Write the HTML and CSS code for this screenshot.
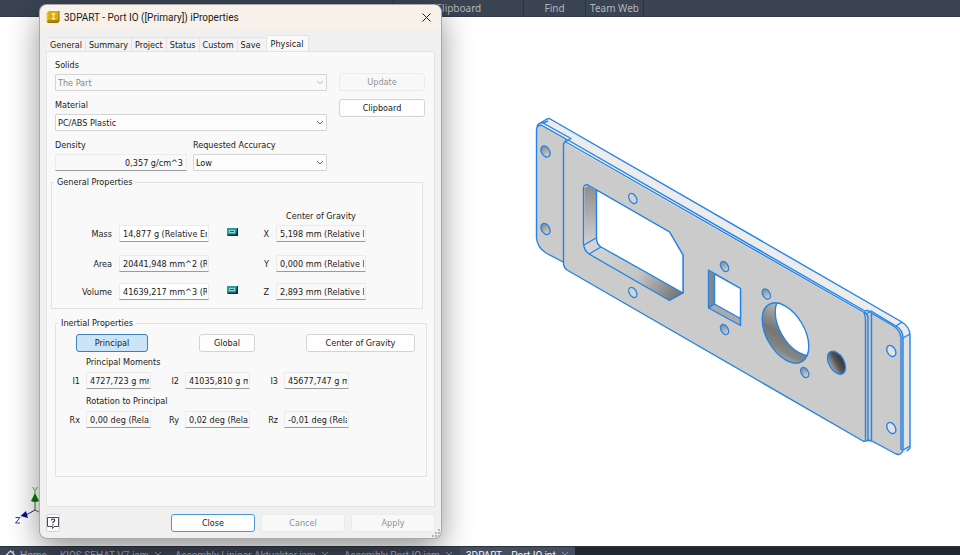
FILE: index.html
```html
<!DOCTYPE html>
<html lang="en">
<head>
<meta charset="utf-8">
<title>3DPART - Port IO iProperties</title>
<link rel="stylesheet" href="styles.css">
</head>
<body>
<div class="app">
  <header class="ribbon">
    <span class="ribbon-space"></span>
    <span class="ribbon-group clipboard">Clipboard</span>
    <span class="ribbon-group find">Find</span>
    <span class="ribbon-group team">Team Web</span>
  </header>

  <main class="canvas">
    <svg class="scene" viewBox="0 17 960 529" role="img" aria-label="Port IO part">
      <defs>
        <linearGradient id="wallV" x1="0" y1="0" x2="0" y2="1"><stop offset="0" stop-color="#8d8d8d"/><stop offset="1" stop-color="#d2d2d2"/></linearGradient>
        <linearGradient id="wallH" gradientUnits="userSpaceOnUse" x1="595" y1="245" x2="678" y2="294"><stop offset="0" stop-color="#d4d4d4"/><stop offset=".55" stop-color="#c4c4c4"/><stop offset="1" stop-color="#777"/></linearGradient>
        <linearGradient id="bore" gradientUnits="userSpaceOnUse" x1="768" y1="312" x2="800" y2="362"><stop offset="0" stop-color="#c2c2c2"/><stop offset=".5" stop-color="#757575"/><stop offset=".75" stop-color="#858585"/><stop offset="1" stop-color="#c4c4c4"/></linearGradient>
        <linearGradient id="hole" x1="0" y1="0" x2="0" y2="1"><stop offset="0" stop-color="#333"/><stop offset=".5" stop-color="#555"/><stop offset="1" stop-color="#a8a8a8"/></linearGradient>
        <linearGradient id="pin" x1="0" y1="0" x2="1" y2="0"><stop offset="0" stop-color="#888"/><stop offset="1" stop-color="#d4d4d4"/></linearGradient>
        <clipPath id="boreClip"><ellipse cx="785.5" cy="333" rx="33" ry="19" transform="rotate(60 785.5 333)"/></clipPath>
      </defs>
      <g stroke="#2483e6" stroke-width="1.4" stroke-linejoin="round" fill="none">
        <path fill="#ececec" d="M537 127Q538 124 542 122L546 119.500Q548 118.500 551 119.500L901 321.500Q910 327 910 335V449Q908 453 903 453L865 441L537 238Z" stroke="none"/>
        <path fill="#cbcbcb" stroke="none" d="M537 129Q537 124 542 125L567 139L565 143L866 315L872 312L896 326Q903 330 903 338V448Q902 456 896 454L872 441L865 442L567 270Q563 267 563 262L546 253Q537 247 537 238Z"/>
        <path fill="#dfe1e3" d="M903 338L910 334V449L903 452Z" stroke="none"/>
        <path d="M536.500 129V238Q537 247 546 253L563 262M536.500 130Q537 124 542 125.500L566 139M537 127Q538 122 543 123L571 138.500L565 142M540 123L547 119Q549 118 552 120L901 321.500Q910 327 910 335V448L907 451M543 123L548 121"/>
        <path d="M563.500 143V262Q563 267 567 270L863 441Q865 442 868 440L872 441L896 454Q902 456 903 449V338Q903 330 896 326L871 311L866 314"/>
        <path d="M563.500 144L565 141.500L864 312.500Q867 313 868 317V440M565 140L568 140L864 310.500M864 311L868 310.500L871.500 313V440M864 313Q865 315 865.500 319V441M872 313.500L892 325Q900.500 330 901 338V450M903 338L910 334M896 326L902 322M903 450L910 446"/>
        <g fill="url(#pin)">
          <ellipse cx="545.500" cy="151.500" rx="6" ry="4" transform="rotate(60 545.500 151.500)"/>
          <ellipse cx="545.500" cy="229" rx="6" ry="4" transform="rotate(60 545.500 229)"/>
          <ellipse cx="724.500" cy="266.500" rx="5.500" ry="3.500" transform="rotate(60 724.500 266.500)"/>
          <ellipse cx="724.500" cy="329.500" rx="5.500" ry="3.500" transform="rotate(60 724.500 329.500)"/>
          <ellipse cx="766.300" cy="294" rx="5.500" ry="3.500" transform="rotate(60 766.300 294)"/>
          <ellipse cx="804.700" cy="372.500" rx="5.500" ry="3.500" transform="rotate(60 804.700 372.500)"/>
        </g>
        <g fill="#d2d2d2">
          <ellipse cx="632.800" cy="198.500" rx="5.500" ry="3.500" transform="rotate(60 632.800 198.500)"/>
          <ellipse cx="632.800" cy="292.500" rx="5.500" ry="3.500" transform="rotate(60 632.800 292.500)"/>
          <ellipse cx="891.300" cy="351" rx="6" ry="4" transform="rotate(60 891.300 351)" fill="#e2e2e2"/>
          <ellipse cx="891.300" cy="428" rx="6" ry="4" transform="rotate(60 891.300 428)" fill="#e2e2e2"/>
        </g>
        <path fill="url(#wallH)" d="M583.500 188Q584 184 588 185L669.500 232L683 255V293L669.500 300.500L589 254Q583.500 250 583.500 243Z"/>
        <path fill="url(#wallV)" stroke="none" d="M584.500 188L588 186L596 190V239L584.500 245Z"/>
        <path fill="#fff" d="M596.500 190L669.500 232L683 255V293L601 247Q596.500 244 596.500 238Z"/>
        <path d="M584 245L596 238M589 254L601 247"/>
        <path fill="#aaa" d="M708.500 270L740.500 288.500V325.500L708.500 308Z"/>
        <path fill="#858585" stroke="none" d="M709 271L714.500 274V304L709 307Z"/>
        <path fill="#fff" d="M714.500 274L740.500 288.500V318.500L714.500 304ZM708.500 308L714.500 304"/>
        <ellipse fill="url(#bore)" stroke="none" cx="785.500" cy="333" rx="33" ry="19" transform="rotate(60 785.500 333)"/>
        <g clip-path="url(#boreClip)"><ellipse fill="#fff" cx="798.500" cy="325.500" rx="33" ry="19" transform="rotate(60 798.500 325.500)"/></g>
        <ellipse cx="785.500" cy="333" rx="33" ry="19" transform="rotate(60 785.500 333)"/>
        <ellipse fill="url(#hole)" cx="836.500" cy="362.700" rx="12.500" ry="7.500" transform="rotate(60 836.500 362.700)"/>
      </g>
      <g class="triad">
        <path d="M35 510V500" stroke="#1b8a1b"/><path d="M31 501L35 493L39 501Q35 503 31 501Z" fill="#087a08"/>
        <path d="M35 510L27 514.500" stroke="#22229a"/><path d="M20.500 516L26 511L28 518Z" fill="#0a0a86"/>
        <path d="M35 510L41 513" stroke="#b33"/>
        <path d="M32.500 487L35 490.500L37.500 487M35 490.500V494" stroke="#2fcf2f" fill="none"/>
        <path d="M15.500 517.500H20L15.500 523H20" stroke="#3535dc" fill="none"/>
      </g>
    </svg>
  </main>

  <nav class="doc-tabs" aria-label="Documents">
    <a class="doc home" href="#"><svg class="home-icon" viewBox="0 0 12 12"><path d="M1 6L6 1L11 6M2.500 5V11H5V7H7V11H9.500V5M9 1V3" fill="none" stroke="#c5c9d0" stroke-width="1.500"/></svg>Home</a>
    <a class="doc kios" href="#">KIOS SEHAT V7.iam<svg class="x" viewBox="0 0 8 8"><path d="M1 1L7 7M7 1L1 7"/></svg></a>
    <a class="doc linear" href="#">Assembly Linioar Aktuaktor.iam<svg class="x" viewBox="0 0 8 8"><path d="M1 1L7 7M7 1L1 7"/></svg></a>
    <a class="doc port" href="#">Assembly Port IO.iam<svg class="x" viewBox="0 0 8 8"><path d="M1 1L7 7M7 1L1 7"/></svg></a>
    <a class="doc current" href="#">3DPART _ Port IO.ipt<svg class="x" viewBox="0 0 8 8"><path d="M1 1L7 7M7 1L1 7"/></svg></a>
    <span class="tabs-rest"></span>
  </nav>

  <section class="dialog" role="dialog" aria-labelledby="dialog-title">
    <div class="title-bar">
      <svg class="app-icon" viewBox="0 0 14 14"><path d="M1 2L3 0H14V11L12 13H1Z" fill="#8a6a06"/><path d="M1 2L3 0H13V10H1Z" fill="#d9ad0b"/><path d="M0 2H2V12H0Z" fill="#e8c544"/><path d="M1 10H12V12H1Z" fill="#b08708"/><path d="M5.500 3H9.500M5.500 8.500H9.500M7.500 3V8.500" stroke="#fff6cf" stroke-width="1.300"/></svg>
      <h1 id="dialog-title">3DPART - Port IO ([Primary]) iProperties</h1>
      <button class="close-x" aria-label="Close window"><svg viewBox="0 0 9 9"><path d="M.5.5L8.500 8.500M8.500.5L.5 8.500" stroke="#222" fill="none"/></svg></button>
    </div>
    <div class="tabs" role="tablist">
      <button role="tab">General</button><button role="tab">Summary</button><button role="tab">Project</button><button role="tab">Status</button><button role="tab">Custom</button><button role="tab" class="save">Save</button><button role="tab" class="active" aria-selected="true">Physical</button>
    </div>
    <div class="panel">
      <div class="top">
        <div class="material">
          <label for="solids">Solids</label>
          <div class="select"><select id="solids" disabled><option>The Part</option></select><svg viewBox="0 0 8 5"><path d="M1 1L4 4L7 1"/></svg></div>
          <label for="material">Material</label>
          <div class="select"><select id="material"><option>PC/ABS Plastic</option></select><svg viewBox="0 0 8 5"><path d="M1 1L4 4L7 1"/></svg></div>
          <div class="pair">
            <div><label for="density">Density</label><input id="density" class="density" value="0,357 g/cm^3" readonly></div>
            <div><label for="accuracy">Requested Accuracy</label><div class="select"><select id="accuracy"><option>Low</option></select><svg viewBox="0 0 8 5"><path d="M1 1L4 4L7 1"/></svg></div></div>
          </div>
        </div>
        <div class="actions"><button class="btn" disabled>Update</button><button class="btn">Clipboard</button></div>
      </div>

      <fieldset class="general">
        <legend>General Properties</legend>
        <div class="general-grid">
          <span class="cog">Center of Gravity</span>
          <label for="mass">Mass</label><input id="mass" class="editable" value="14,877 g (Relative Error)">
          <svg class="calc" viewBox="0 0 11 8"><path d="M0 0H11V8H1L0 7Z" fill="#082f55"/><path d="M0 0H10L9 6.500H0Z" fill="#2b9c98"/><path d="M2 2H8V5H2Z" fill="#8bdad0"/><path d="M3 3.500H7" stroke="#185d69"/></svg>
          <label for="cx">X</label><input id="cx" value="5,198 mm (Relative Error)" readonly>
          <label for="area">Area</label><input id="area" value="20441,948 mm^2 (Relative)" readonly><span></span>
          <label for="cy">Y</label><input id="cy" value="0,000 mm (Relative Error)" readonly>
          <label for="volume">Volume</label><input id="volume" class="editable" value="41639,217 mm^3 (Relative)">
          <svg class="calc" viewBox="0 0 11 8"><path d="M0 0H11V8H1L0 7Z" fill="#082f55"/><path d="M0 0H10L9 6.500H0Z" fill="#2b9c98"/><path d="M2 2H8V5H2Z" fill="#8bdad0"/><path d="M3 3.500H7" stroke="#185d69"/></svg>
          <label for="cz">Z</label><input id="cz" value="2,893 mm (Relative Error)" readonly>
        </div>
      </fieldset>

      <fieldset class="inertial">
        <legend>Inertial Properties</legend>
        <div class="modes"><button class="btn pressed" aria-pressed="true">Principal</button><button class="btn global">Global</button><button class="btn gravity">Center of Gravity</button></div>
        <div class="inertia-grid">
          <span class="heading">Principal Moments</span>
          <label for="i1">I1</label><input id="i1" value="4727,723 g mm^2" readonly>
          <label for="i2">I2</label><input id="i2" value="41035,810 g mm^2" readonly>
          <label for="i3">I3</label><input id="i3" value="45677,747 g mm^2" readonly>
          <span class="heading">Rotation to Principal</span>
          <label for="rx">Rx</label><input id="rx" value="0,00 deg (Relative)" readonly>
          <label for="ry">Ry</label><input id="ry" value="0,02 deg (Relative)" readonly>
          <label for="rz">Rz</label><input id="rz" value="-0,01 deg (Relative)" readonly>
        </div>
      </fieldset>
    </div>
    <div class="footer">
      <button class="help" aria-label="Help"><svg viewBox="0 0 12 12"><path d="M.5.5H11.500V9.500H7L5.500 11.500V9.500H.5Z" fill="#fff" stroke="#444b55"/><path d="M4.300 3.500Q4.500 2 6 2Q7.700 2 7.700 3.500Q7.700 4.300 6 5.200V6.300M6 7.300V8.500" fill="none" stroke="#222" stroke-width="1.100"/></svg></button>
      <button class="btn primary">Close</button><button class="btn" disabled>Cancel</button><button class="btn" disabled>Apply</button>
    </div>
    <svg class="grip" viewBox="0 0 8 8"><path d="M6 0H8V2H6ZM3 3H5V5H3ZM6 3H8V5H6ZM0 6H2V8H0ZM3 6H5V8H3ZM6 6H8V8H6Z" fill="#b5b5b5"/></svg>
  </section>
</div>
</body>
</html>
```

FILE: styles.css
```css
* { box-sizing: border-box; }
body { margin: 0; background: #fff; color: #1a1a1a; font: 9px/12px "DejaVu Sans Condensed", "Noto Sans", sans-serif; }
button, input, select { font: inherit; color: inherit; margin: 0; }
svg { display: block; }
.app { position: relative; display: flex; flex-direction: column; height: 100vh; overflow: hidden; }

.ribbon { display: flex; flex: none; height: 17px; background: #3b4453; color: #b3b7bf; font: 10px/17px "Noto Sans", sans-serif; text-align: center; border-bottom: 1px solid #333b49; }
.ribbon-space { width: 394px; border-right: 1px solid #2c3442; }
.ribbon-group { border-right: 1px solid #2c3442; }
.clipboard { width: 130px; }
.find { width: 62px; }
.team { width: 58px; }

.canvas { flex: 1; min-height: 0; background: #fff; }
.scene { width: 100%; height: 100%; }

.doc-tabs { display: flex; flex: none; height: 9px; overflow: hidden; background: #3b4453; border-top: 1px solid #2b3341; font: 10px/18px Roboto, "Noto Sans", sans-serif; }
.doc { display: flex; flex: none; height: 18px; color: #a4a9b2; text-decoration: none; white-space: nowrap; }
.x { width: 8px; height: 8px; margin: 4px 0 0 5px; fill: none; stroke: #9399a4; }
.home { gap: 4px; width: 60px; padding-left: 5px; }
.home-icon { width: 11px; height: 11px; margin-top: 3px; }
.kios { width: 115px; }
.linear { width: 169px; }
.port { width: 116px; }
.current { width: 115px; padding: 0 6px; background: #454e5e; color: #f2f3f5; }
.tabs-rest { flex: 1; background: #1f2733; }

.dialog { position: absolute; left: 40px; top: 5px; width: 401px; background: #f0f0f0; border-radius: 7px; overflow: hidden; box-shadow: 0 0 0 1px #a9a9a9, 0 10px 32px rgba(0, 0, 0, .45); }
.title-bar { display: flex; align-items: center; gap: 4px; height: 25px; padding: 0 10px 0 6px; background: #f8f1ea; }
.app-icon { width: 14px; height: 13px; }
.title-bar h1 { flex: 1; margin: 0; font: 10px/14px Roboto, "Noto Sans", sans-serif; color: #1b1b1b; }
.close-x { width: 9px; height: 9px; padding: 0; border: 0; background: none; }

.tabs { display: flex; align-items: flex-end; height: 21px; padding: 0 7px; }
.tabs button { height: 14px; padding: 0 3px; border: 1px solid #e4e4e4; border-bottom: 0; border-left: 0; background: #f3f3f3; white-space: nowrap; }
.tabs .save { width: 29px; text-align: left; }
.tabs .active { height: 16px; padding: 0 4px; background: #f9f9f9; }

.panel { margin: 0 6px; height: 456px; padding: 7px; border: 1px solid #e3e3e3; background: #f9f9f9; }
.top { display: grid; grid-template-columns: 272px 86px; gap: 12px; padding-left: 1px; }
.material label { display: block; height: 15px; }
.select { position: relative; margin-bottom: 8px; }
.select select { display: block; width: 100%; height: 17px; padding: 0 2px; appearance: none; border: 1px solid #d5d5d5; border-radius: 1px; background: #fdfdfd; }
.select select:disabled { color: #888; opacity: 1; background: #f9f9f9; }
.select svg { position: absolute; right: 3px; top: 6px; width: 8px; height: 5px; fill: none; stroke: #666; pointer-events: none; }
.select select:disabled + svg { stroke: #bbb; }
.pair { display: grid; grid-template-columns: 132px 134px; gap: 6px; }

input { display: block; width: 100%; height: 17px; padding: 0 1px 0 3px; border: 1px solid #ececec; border-bottom-color: #9b9b9b; border-radius: 1px; background: #f9f9f9; }
.editable { background: #fff; }
.density { text-align: right; padding-right: 3px; }
.actions { display: flex; flex-direction: column; gap: 8px; padding-top: 14px; }

.btn { height: 18px; padding: 0; border: 1px solid #d3d3d3; border-radius: 3px; background: #fefefe; text-align: center; }
.btn:disabled { color: #919191; border-color: #ebebeb; background: #f8f8f8; }
.pressed { border-color: #3f7fb5; background: #cce4f7; }
.primary { border-color: #4b97cd; }

fieldset { min-width: 0; margin: 0; padding: 0; border: 1px solid #e2e2e2; }
legend { margin-left: 2px; padding: 0 3px; }
.general { height: 133px; margin: -3px 4px 8px -3px; }
.general-grid { display: grid; grid-template-columns: 60px 90px 22px 24px 90px; grid-template-rows: 15px 30px 28px 17px; column-gap: 7px; align-items: start; padding-top: 22px; }
.general-grid > label, .inertia-grid > label { text-align: right; padding-top: 3px; white-space: nowrap; }
.cog { grid-column: 5; text-align: center; white-space: nowrap; }
.calc { width: 11px; height: 8px; margin-top: 3px; justify-self: end; }

.inertial { height: 160px; margin: 0 0 0 1px; }
.modes { display: flex; padding: 5px 11px 0 20px; }
.modes .pressed { width: 72px; }
.global { width: 56px; margin-left: 51px; }
.gravity { width: 109px; margin-left: auto; }
.inertia-grid { display: grid; grid-template-columns: 24px 65px 22px 65px 22px 65px; grid-template-rows: 16px 23px 16px 17px; column-gap: 6px; align-items: start; padding-top: 4px; }
.heading { grid-column: 2 / 7; }

.footer { display: flex; gap: 6px; padding: 7px 6px 6px; }
.footer .btn { width: 84px; }
.footer .primary { margin-left: auto; }
.help { width: 14px; height: 18px; padding: 0; border: 1px solid #d3d3d3; border-radius: 3px; background: #fdfdfd; }
.help svg { width: 12px; height: 12px; }
.grip { position: absolute; right: 1px; bottom: 1px; width: 8px; height: 8px; }
```
